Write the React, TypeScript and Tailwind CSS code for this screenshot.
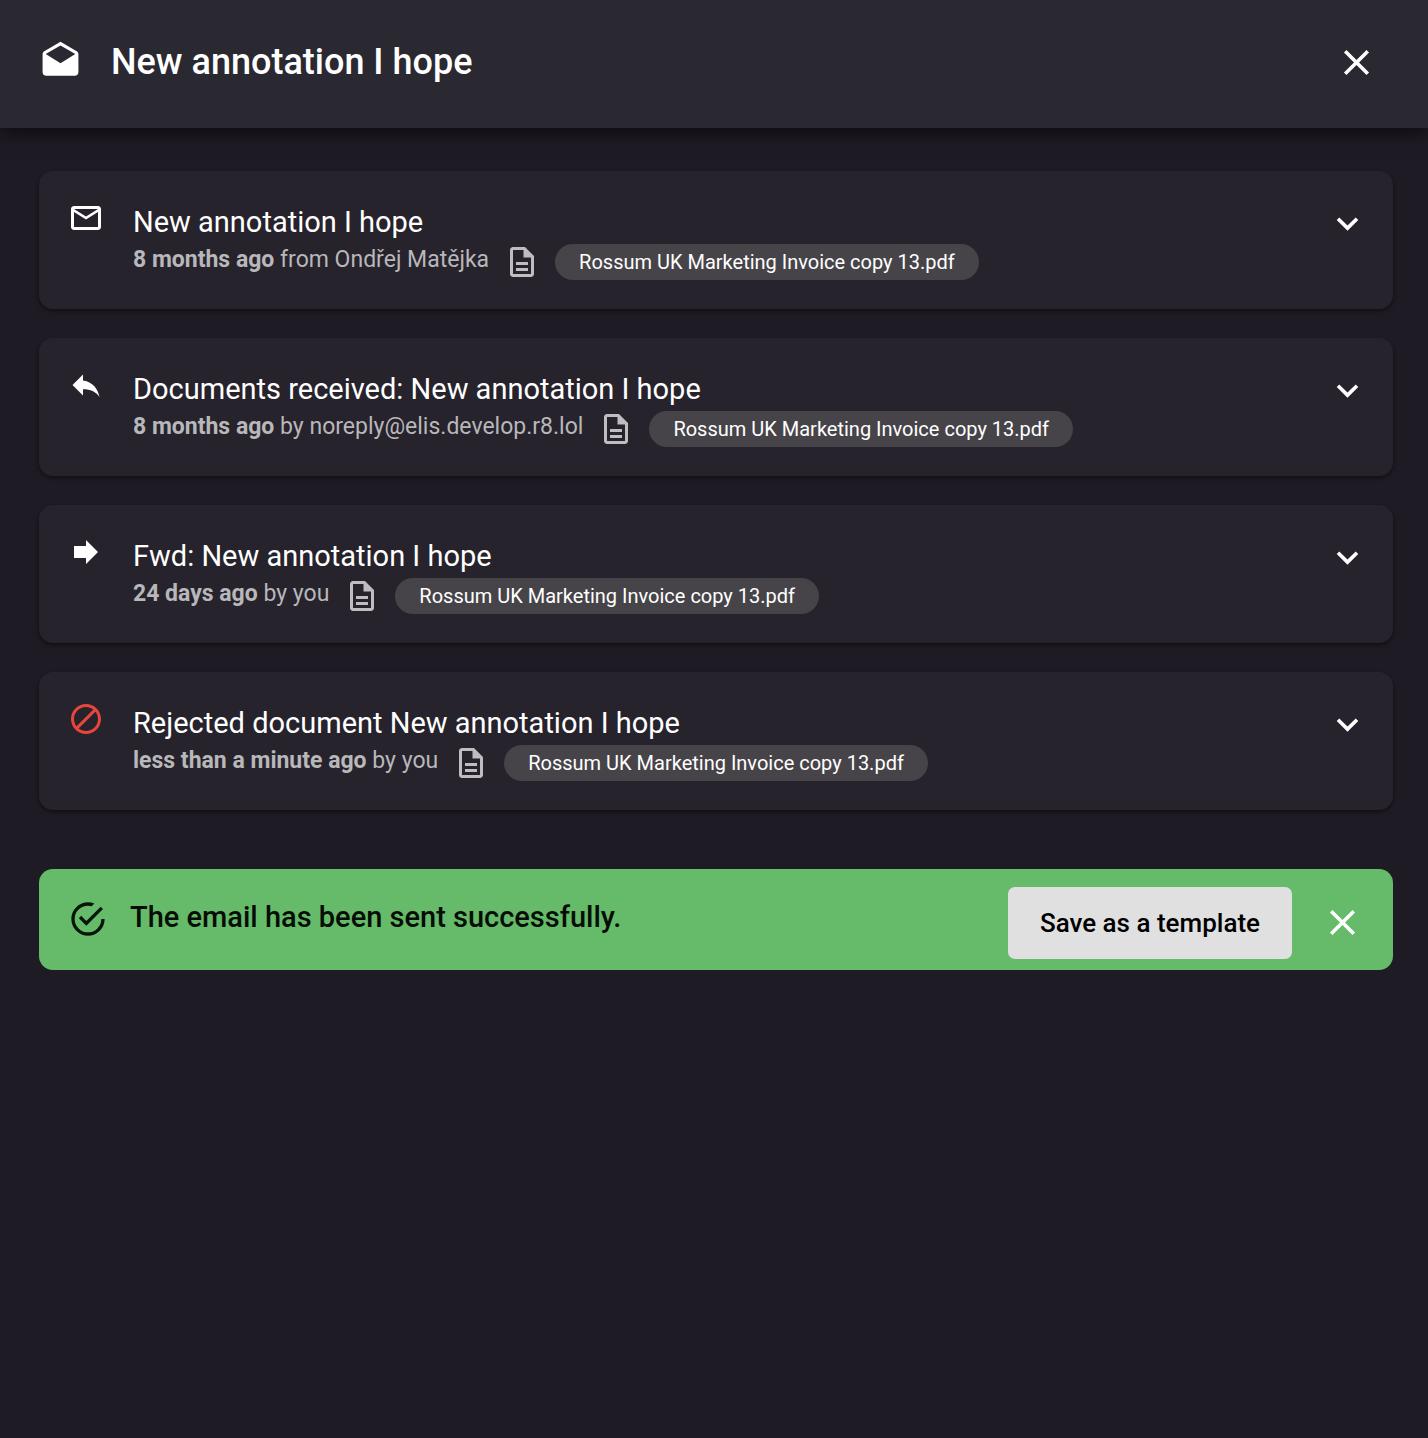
import { useState } from 'react';
import type { ReactNode } from 'react';

type Message = {
  id: number;
  kind: 'received' | 'reply' | 'forward' | 'rejected';
  subject: string;
  when: string;
  who: string;
  attachment: string;
};

const messages: Message[] = [
  {
    id: 1,
    kind: 'received',
    subject: 'New annotation I hope',
    when: '8 months ago',
    who: 'from Ondřej Matějka',
    attachment: 'Rossum UK Marketing Invoice copy 13.pdf',
  },
  {
    id: 2,
    kind: 'reply',
    subject: 'Documents received: New annotation I hope',
    when: '8 months ago',
    who: 'by noreply@elis.develop.r8.lol',
    attachment: 'Rossum UK Marketing Invoice copy 13.pdf',
  },
  {
    id: 3,
    kind: 'forward',
    subject: 'Fwd: New annotation I hope',
    when: '24 days ago',
    who: 'by you',
    attachment: 'Rossum UK Marketing Invoice copy 13.pdf',
  },
  {
    id: 4,
    kind: 'rejected',
    subject: 'Rejected document New annotation I hope',
    when: 'less than a minute ago',
    who: 'by you',
    attachment: 'Rossum UK Marketing Invoice copy 13.pdf',
  },
];

function Icon({ className, children }: { className: string; children: ReactNode }) {
  return (
    <svg viewBox="0 0 24 24" fill="currentColor" aria-hidden="true" className={`shrink-0 ${className}`}>
      {children}
    </svg>
  );
}

const closePath =
  'M19 6.41 17.59 5 12 10.59 6.41 5 5 6.41 10.59 12 5 17.59 6.41 19 12 13.41 17.59 19 19 17.59 13.41 12z';

const kindPaths: Record<Message['kind'], string> = {
  received:
    'M22 6c0-1.1-.9-2-2-2H4c-1.1 0-2 .9-2 2v12c0 1.1.9 2 2 2h16c1.1 0 2-.9 2-2V6zm-2 0-8 5-8-5h16zm0 12H4V8l8 5 8-5v10z',
  reply: 'M10 9V5l-7 7 7 7v-4.1c5 0 8.5 1.6 11 5.1-1-5-4-10-11-11z',
  forward: 'M12 8V4l8 8-8 8v-4H4V8z',
  rejected:
    'M12 2C6.48 2 2 6.48 2 12s4.48 10 10 10 10-4.48 10-10S17.52 2 12 2zM4 12c0-4.42 3.58-8 8-8 1.85 0 3.55.63 4.9 1.69L5.69 16.9C4.63 15.55 4 13.85 4 12zm8 8c-1.85 0-3.55-.63-4.9-1.69L18.31 7.1C19.37 8.45 20 10.15 20 12c0 4.42-3.58 8-8 8z',
};

function MessageCard({ message }: { message: Message }) {
  return (
    <article className="flex items-start rounded-[14px] bg-[#26232c] p-[29px] pr-6 shadow-[0_2px_4px_rgba(0,0,0,0.45)]">
      <Icon className={message.kind === 'rejected' ? 'size-9 text-[#e8453c]' : 'size-9 text-white'}>
        <path d={kindPaths[message.kind]} />
      </Icon>

      <div className="ml-[29px] min-w-0 flex-1">
        <h2 className="text-[29px] leading-[44px] text-white">{message.subject}</h2>
        <div className="flex items-start gap-[15px]">
          <p className="text-[23px] leading-8 text-[#b8b7ba]">
            <strong className="font-bold">{message.when}</strong> {message.who}
          </p>
          <Icon className="size-9 text-[#bebdc0]">
            <path d="M8 16h8v2H8zm0-4h8v2H8zm6-10H6c-1.1 0-2 .9-2 2v16c0 1.1.89 2 1.99 2H18c1.1 0 2-.9 2-2V8l-6-6zm4 18H6V4h7v5h5v11z" />
          </Icon>
          <span className="rounded-full bg-[#474449] px-6 text-[20px] leading-9 whitespace-nowrap text-white">
            {message.attachment}
          </span>
        </div>
      </div>

      <button type="button" aria-label={`Expand ${message.subject}`} className="mt-0.5 cursor-pointer text-white">
        <Icon className="size-[43px]">
          <path d="M16.59 8.59 12 13.17 7.41 8.59 6 10l6 6 6-6z" />
        </Icon>
      </button>
    </article>
  );
}

export default function App() {
  const [alertOpen, setAlertOpen] = useState(true);

  return (
    <div className="min-h-screen bg-[#1e1b24] font-[Roboto,sans-serif]">
      <header className="flex h-32 items-center bg-[#2a2831] pr-[50px] pl-[39px] shadow-[0_4px_18px_rgba(0,0,0,0.6)]">
        <Icon className="mb-1.5 size-[43px] text-white">
          <path d="M21.99 8c0-.72-.37-1.35-.94-1.7L12 1 2.95 6.3C2.38 6.65 2 7.28 2 8v10c0 1.1.9 2 2 2h16c1.1 0 2-.9 2-2l-.01-10zM12 13 3.74 7.84 12 3l8.26 4.84L12 13z" />
        </Icon>
        <h1 className="ml-[29px] flex-1 pb-1 text-[36px] leading-[54px] font-medium text-white">
          New annotation I hope
        </h1>
        <button type="button" aria-label="Close" className="cursor-pointer pb-1 text-white">
          <Icon className="size-[43px]">
            <path d={closePath} />
          </Icon>
        </button>
      </header>

      <main className="pt-[43px] pr-[35px] pb-10 pl-[39px]">
        <div className="flex flex-col gap-[29px]">
          {messages.map((message) => (
            <MessageCard key={message.id} message={message} />
          ))}
        </div>

        {alertOpen && (
          <div
            role="status"
            className="mt-[59px] flex items-start rounded-[14px] bg-[#66bb6a] px-[29px] pt-[18px] pb-[11px]"
          >
            <Icon className="mt-3 size-10 text-[#06160a]">
              <path d="M20,12A8,8 0 0,1 12,20A8,8 0 0,1 4,12A8,8 0 0,1 12,4C12.76,4 13.5,4.11 14.2,4.31L15.77,2.74C14.61,2.26 13.34,2 12,2A10,10 0 0,0 2,12A10,10 0 0,0 12,22A10,10 0 0,0 22,12M7.91,10.08L6.5,11.5L11,16L21,6L19.59,4.58L11,13.17L7.91,10.08Z" />
            </Icon>
            <p className="mt-2 ml-[22px] flex-1 text-[29px] leading-[44px] font-medium text-[#060d06]">
              The email has been sent successfully.
            </p>
            <button
              type="button"
              className="cursor-pointer rounded-[7px] bg-[#e0e0e0] px-8 text-[26px] leading-[72px] font-medium text-black"
            >
              Save as a template
            </button>
            <button
              type="button"
              aria-label="Dismiss"
              onClick={() => setAlertOpen(false)}
              className="mt-[14px] ml-[29px] cursor-pointer text-white"
            >
              <Icon className="size-[43px]">
                <path d={closePath} />
              </Icon>
            </button>
          </div>
        )}
      </main>
    </div>
  );
}
